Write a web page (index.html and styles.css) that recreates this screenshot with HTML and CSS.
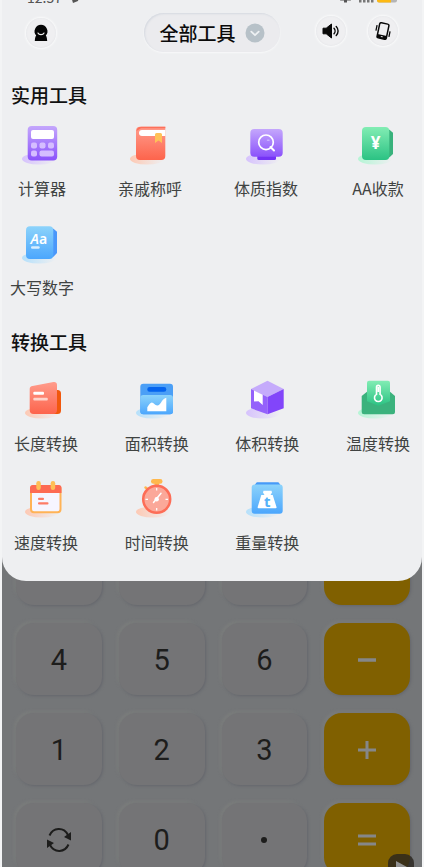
FILE: index.html
```html
<!DOCTYPE html>
<html lang="zh-CN">
<head>
    <meta charset="UTF-8">
    <meta name="viewport" content="width=device-width, initial-scale=1.0">
    <title>全部工具</title>
    <link rel="stylesheet" href="styles.css">
</head>
<body>
    <!-- gradients shared by the tool icons -->
    <svg class="defs" width="0" height="0" aria-hidden="true">
        <defs>
            <linearGradient id="purple" x1="0" y1="0" x2="0" y2="1"><stop offset="0" stop-color="#c4a7fc"/><stop offset="1" stop-color="#8b52fb"/></linearGradient>
            <linearGradient id="red" x1="0" y1="0" x2="0" y2="1"><stop offset="0" stop-color="#ff9c8c"/><stop offset="1" stop-color="#fd644c"/></linearGradient>
            <linearGradient id="green" x1="0" y1="0" x2="0" y2="1"><stop offset="0" stop-color="#82edb4"/><stop offset="1" stop-color="#2bc283"/></linearGradient>
            <linearGradient id="blue" x1="0" y1="0" x2="0" y2="1"><stop offset="0" stop-color="#8cd3fb"/><stop offset="1" stop-color="#4ba6fd"/></linearGradient>
            <linearGradient id="purple-shade"><stop offset="0" stop-color="#d6c2fd"/><stop offset="1" stop-color="#d6c2fd" stop-opacity="0"/></linearGradient>
            <linearGradient id="red-shade"><stop offset="0" stop-color="#fdc9b4"/><stop offset="1" stop-color="#fdc9b4" stop-opacity="0"/></linearGradient>
            <linearGradient id="green-shade"><stop offset="0" stop-color="#b4f5d5"/><stop offset="1" stop-color="#b4f5d5" stop-opacity="0"/></linearGradient>
            <linearGradient id="blue-shade"><stop offset="0" stop-color="#b5e0fb"/><stop offset="1" stop-color="#b5e0fb" stop-opacity="0"/></linearGradient>
        </defs>
    </svg>

    <div class="screen">
        <main class="panel">
            <div class="status">
                <span class="status-time">12:57</span>
                <svg class="status-arrow" width="10" height="10" viewBox="0 0 10 10"><path d="M0 0h10L8 8 3 10z" fill="#555"/></svg>
                <svg class="status-icons" width="57" height="12" viewBox="0 0 57 12">
                    <path d="M0 9.500h11L9 6H2zM4 9.500h3v2H4z" fill="#555"/>
                    <path d="M19 6h2.500v5.500H19zM23 4h2.500v7.500H23zM27 2h2.500v9.500H27zM31 0h2.500v11.500H31z" fill="#777"/>
                    <rect x="37" y="0" width="20" height="11.500" rx="2" fill="#b5b5b5"/>
                    <path d="M37 0h14v11.500H39a2 2 0 0 1-2-2z" fill="#fdb913"/>
                </svg>
            </div>

            <header class="toolbar">
                <button class="round" aria-label="我的">
                    <svg width="16" height="18" viewBox="0 0 16 18"><path d="M8 .8a6.500 6.500 0 0 1 4.800 10.800c.8.800 1.200 2.500 1.400 5.400H1.800c.2-2.900.6-4.600 1.400-5.400A6.500 6.500 0 0 1 8 .8z" fill="#050505"/><path d="M5 9c1 2.200 5 2.200 6 0" fill="none" stroke="#eee" stroke-width="1.200" stroke-linecap="round"/></svg>
                </button>
                <button class="picker">
                    全部工具
                    <svg width="20" height="20" viewBox="0 0 20 20"><circle cx="10" cy="10" r="9.500" fill="#b7c1c8"/><path d="M6.300 8.700 10 12.200l3.700-3.500" fill="none" stroke="#eef1f3" stroke-width="1.800" stroke-linecap="round" stroke-linejoin="round"/></svg>
                </button>
                <div class="actions">
                    <button class="round" aria-label="声音">
                        <svg width="18" height="16" viewBox="0 0 18 16"><path d="M1 5.200h3.200L9.500 1v14l-5.300-4.200H1z" fill="#080808" stroke="#080808" stroke-linejoin="round"/><path d="M12 5.300c1.400 1.500 1.400 4 0 5.500M14.200 3.500c2.500 2.500 2.500 6.500 0 9" fill="none" stroke="#080808" stroke-width="1.400" stroke-linecap="round"/></svg>
                    </button>
                    <button class="round" aria-label="振动">
                        <svg width="18" height="18" viewBox="0 0 18 18"><g transform="rotate(12 9 9)"><rect x="4.300" y="1.300" width="9.400" height="15.400" rx="1.500" fill="none" stroke="#080808" stroke-width="1.500"/><path d="M4.300 13h9.400v3.700H4.300z" fill="#080808"/><path d="M8 14.800h2" stroke="#eee"/><path d="M2 4.500v5.500M16 8v5.500" stroke="#080808" stroke-width="1.300"/></g></svg>
                    </button>
                </div>
            </header>

            <section>
                <h2 class="section-title">实用工具</h2>
                <div class="tools tools-daily">
                    <button class="tool">
                        <svg width="44" height="44" viewBox="0 0 44 44">
                            <ellipse cx="19" cy="37" rx="17" ry="5.500" fill="url(#purple-shade)"/>
                            <rect x="7.700" y="4" width="29.500" height="34.500" rx="4" fill="url(#purple)"/>
                            <rect x="11" y="8" width="23" height="9" rx="2" fill="#fff"/>
                            <g fill="#d5bdff"><rect x="11" y="20.500" width="6" height="6" rx="2"/><rect x="19.500" y="20.500" width="6" height="6" rx="2"/><rect x="28" y="20.500" width="6" height="6" rx="2"/><rect x="11" y="28.500" width="6" height="6" rx="2"/><rect x="19.500" y="28.500" width="14.500" height="6" rx="2"/></g>
                        </svg>
                        计算器
                    </button>
                    <button class="tool">
                        <svg width="44" height="44" viewBox="0 0 44 44">
                            <ellipse cx="19" cy="37" rx="17" ry="5.500" fill="url(#red-shade)"/>
                            <path d="M12 4.700h25.300V34a4 4 0 0 1-4 4H12a4 4 0 0 1-4-4V8.700a4 4 0 0 1 4-4z" fill="url(#red)"/>
                            <path d="M8.500 9c.5-3 2-4.300 5-4.300h23.800v1.600H13" fill="#fd705a"/>
                            <path d="M14 8h23.300v6H14a3 3 0 0 1 0-6z" fill="#fff"/>
                            <path d="M27 12.500a1.500 1.500 0 0 1 1.500-1.500h4a1.500 1.500 0 0 1 1.500 1.500V21l-3.500-2.500L27 21z" fill="#ffc157"/>
                        </svg>
                        亲戚称呼
                    </button>
                    <button class="tool">
                        <svg width="44" height="44" viewBox="0 0 44 44">
                            <ellipse cx="19" cy="37" rx="17" ry="5.500" fill="url(#purple-shade)"/>
                            <path d="M13.300 34h18.700v2.500a1.500 1.500 0 0 1-1.500 1.500H14.800a1.500 1.500 0 0 1-1.500-1.500z" fill="#7433f5"/>
                            <rect x="6.300" y="7" width="32.400" height="27.700" rx="4" fill="url(#purple)"/>
                            <circle cx="22" cy="20.300" r="7.300" fill="none" stroke="#fff" stroke-width="1.700"/>
                            <path d="m26.500 25 3.500 3.500" stroke="#fff" stroke-width="2" stroke-linecap="round"/>
                            <path d="M23.500 18.200h1.500" stroke="#c9b0ff" stroke-width="1.500" stroke-linecap="round"/>
                        </svg>
                        体质指数
                    </button>
                    <button class="tool">
                        <svg width="44" height="44" viewBox="0 0 44 44">
                            <ellipse cx="19" cy="37" rx="17" ry="5.500" fill="url(#green-shade)"/>
                            <path d="M28 7.700h5.500l3.500 3V32l-3.500 3.300H28z" fill="#38b27c"/>
                            <rect x="6" y="5" width="27.300" height="33" rx="4" fill="url(#green)"/>
                            <text class="glyph" x="19.700" y="27" text-anchor="middle" font-size="17" fill="#fff">¥</text>
                        </svg>
                        AA收款
                    </button>
                    <button class="tool">
                        <svg width="44" height="44" viewBox="0 0 44 44">
                            <ellipse cx="19" cy="37" rx="17" ry="5.500" fill="url(#blue-shade)"/>
                            <path d="M28 7.700h5.500l3.500 3V32l-3.500 3.700H28z" fill="#4a97fa"/>
                            <rect x="6" y="5.300" width="27.300" height="32.700" rx="4" fill="url(#blue)"/>
                            <text class="glyph glyph-light" x="10.500" y="22.500" font-size="14" fill="#fff"><tspan font-style="italic">A</tspan>a</text>
                            <rect x="11" y="25.300" width="8.700" height="2.500" rx="1.200" fill="#d9efff"/>
                        </svg>
                        大写数字
                    </button>
                </div>
            </section>

            <section>
                <h2 class="section-title">转换工具</h2>
                <div class="tools tools-convert">
                    <button class="tool">
                        <svg width="44" height="44" viewBox="0 0 44 44">
                            <ellipse cx="18" cy="36" rx="17" ry="5.500" fill="url(#red-shade)"/>
                            <path d="M29 13h4.500a3.500 3.500 0 0 1 3.500 3.500v17a3.500 3.500 0 0 1-3.500 3.500H29z" fill="#f1580d"/>
                            <path d="M8.500 9 29.500 5c2-.3 3.500.7 3.500 2.700V33a4 4 0 0 1-4 4H9.700a4 4 0 0 1-4-4V12c0-1.700 1-2.700 2.800-3z" fill="url(#red)"/>
                            <rect x="9.300" y="14.700" width="10.700" height="3" rx="1" fill="#fff"/>
                            <rect x="9.300" y="20.700" width="14.500" height="2.700" rx="1" fill="#ffd3ca"/>
                        </svg>
                        长度转换
                    </button>
                    <button class="tool">
                        <svg width="44" height="44" viewBox="0 0 44 44">
                            <ellipse cx="18" cy="36" rx="17" ry="5.500" fill="url(#blue-shade)"/>
                            <rect x="5.300" y="6.700" width="32.700" height="30.600" rx="3" fill="#4b9ff6"/>
                            <rect x="12.300" y="10" width="19" height="4.700" rx="2.300" fill="#0564ee"/>
                            <rect x="5.300" y="18" width="32.700" height="19.300" rx="3" fill="url(#blue)"/>
                            <path d="M12.300 34.300v-4c1.500-2.300 3-4.800 4.500-4.800 2 0 3 3 5.500 3 3.500 0 4-6.500 9-7.800v13.600z" fill="#fff"/>
                        </svg>
                        面积转换
                    </button>
                    <button class="tool">
                        <svg width="44" height="44" viewBox="0 0 44 44">
                            <ellipse cx="18" cy="36" rx="17" ry="5.500" fill="url(#purple-shade)"/>
                            <path d="M22.500 3.700 38.700 12l-16.200 8L6 12z" fill="#c5abfb"/>
                            <path d="m6 12 16.500 8v17.300L6 31.300z" fill="#9461fb"/>
                            <path d="m38.700 12-16.200 8v17.300l16.200-6z" fill="#8245fa"/>
                            <path d="m9 13.500 8.700 4.200V28l-4.200-3.800L9 24.500z" fill="#fff"/>
                        </svg>
                        体积转换
                    </button>
                    <button class="tool">
                        <svg width="44" height="44" viewBox="0 0 44 44">
                            <ellipse cx="19" cy="36" rx="17" ry="5.500" fill="url(#green-shade)"/>
                            <path d="m5.700 19 5.300-4.300h23l5 4.300v15.800a2.500 2.500 0 0 1-2.500 2.500H8.200a2.500 2.500 0 0 1-2.500-2.500z" fill="#3bb27d"/>
                            <path d="M13 3.700h19a2 2 0 0 1 2 2v18.600l-11.700 4.500L11 24.300V5.700a2 2 0 0 1 2-2z" fill="url(#green)"/>
                            <path d="M20.500 10.200a1.800 1.800 0 0 1 3.600 0v7.200a3.800 3.800 0 1 1-3.600 0z" fill="none" stroke="#fff" stroke-width="1.600"/>
                            <path d="M22.300 10v5" stroke="#fff" stroke-width="2"/>
                        </svg>
                        温度转换
                    </button>
                    <button class="tool">
                        <svg width="44" height="44" viewBox="0 0 44 44">
                            <ellipse cx="18" cy="36" rx="17" ry="5.500" fill="url(#red-shade)"/>
                            <rect x="7" y="10" width="29.500" height="26.200" rx="3" fill="#f6f5ff" stroke="#ffb356" stroke-width="2"/>
                            <path d="M6 17v-5a3 3 0 0 1 3-3h25.500a3 3 0 0 1 3 3v5z" fill="#fd6a53"/>
                            <rect x="12.300" y="5" width="4.500" height="9" rx="2.200" fill="#ffbf55"/>
                            <rect x="26.700" y="5" width="4.500" height="9" rx="2.200" fill="#ffbf55"/>
                            <rect x="14" y="21.700" width="6" height="2.200" rx="1" fill="#fd7b66"/>
                            <rect x="14" y="26.200" width="10.500" height="2.200" rx="1" fill="#fd7b66"/>
                        </svg>
                        速度转换
                    </button>
                    <button class="tool">
                        <svg width="44" height="44" viewBox="0 0 44 44">
                            <ellipse cx="18" cy="36" rx="17" ry="5.500" fill="url(#red-shade)"/>
                            <rect x="16" y="3" width="11.500" height="4.700" rx="2.300" fill="#ffb84d"/>
                            <path d="M19.500 7h4.500v3h-4.500z" fill="#ffb84d"/>
                            <path d="m10.500 11.500 2.500 2" stroke="#ffb84d" stroke-width="2.500" stroke-linecap="round"/>
                            <circle cx="21.700" cy="23.300" r="13.500" fill="#fba899" stroke="#fd6d57" stroke-width="2.500"/>
                            <path d="M21.700 12v2.500M21.700 32v2.500M10.500 23.300H13M30.500 23.300H33" stroke="#fff" stroke-width="1.200"/>
                            <path d="M18.500 26.500 26 17.300" stroke="#fff" stroke-width="1.500" stroke-linecap="round"/>
                            <circle cx="21.700" cy="23.300" r="2.200" fill="#fff"/>
                        </svg>
                        时间转换
                    </button>
                    <button class="tool">
                        <svg width="44" height="44" viewBox="0 0 44 44">
                            <ellipse cx="18" cy="36" rx="17" ry="5.500" fill="url(#blue-shade)"/>
                            <path d="m9 10 2.300-3.200a1 1 0 0 1 .8-.5h21a1 1 0 0 1 .8.500L36 10z" fill="#469af8"/>
                            <rect x="6.700" y="8.500" width="31" height="29.200" rx="3" fill="url(#blue)"/>
                            <path d="M18.500 14.700h8l.5 1.800-1.500 2.500h2.200L31.500 31a1 1 0 0 1-1 1.300H13.700a1 1 0 0 1-1-1.300l3.600-12h3.200L18 16.500z" fill="#fff"/>
                            <text class="glyph" x="22.300" y="30.500" text-anchor="middle" font-size="15" fill="#55b2f8">t</text>
                        </svg>
                        重量转换
                    </button>
                </div>
            </section>
        </main>

        <div class="keypad">
            <button class="key" aria-label="七"></button>
            <button class="key" aria-label="八"></button>
            <button class="key" aria-label="九"></button>
            <button class="key key-op" aria-label="乘"></button>
            <button class="key">4</button>
            <button class="key">5</button>
            <button class="key">6</button>
            <button class="key key-op" aria-label="减">
                <svg width="20" height="20" viewBox="0 0 20 20"><path d="M1 10h18" stroke="#858789" stroke-width="3.500"/></svg>
            </button>
            <button class="key">1</button>
            <button class="key">2</button>
            <button class="key">3</button>
            <button class="key key-op" aria-label="加">
                <svg width="20" height="20" viewBox="0 0 20 20"><path d="M1 10h18M10 1v18" stroke="#858789" stroke-width="3"/></svg>
            </button>
            <button class="key" aria-label="切换">
                <svg width="26" height="26" viewBox="0 0 26 26"><g fill="none" stroke="#1d1d1c" stroke-width="2"><path d="M3.500 8.500C7 .5 17.500-.5 22 8"/><path d="M22.500 17.500C19 25.500 8.500 26.500 4 18"/></g><path d="M25 5v8.500L18 10zM1 21v-8.500l7 3.500z" fill="#1d1d1c"/></svg>
            </button>
            <button class="key">0</button>
            <button class="key" aria-label="小数点">
                <svg width="8" height="8" viewBox="0 0 8 8"><circle cx="4" cy="4" r="3" fill="#1d1d1c"/></svg>
            </button>
            <button class="key key-op" aria-label="等于">
                <svg width="20" height="20" viewBox="0 0 20 20"><path d="M1 6h18M1 14h18" stroke="#858789" stroke-width="3"/></svg>
            </button>
        </div>

        <button class="play" aria-label="播放">
            <svg width="12" height="12" viewBox="0 0 12 12"><path d="M1 0v12l11-6z" fill="#929292"/></svg>
        </button>
    </div>
</body>
</html>
```
FILE: styles.css
```css
* {
    box-sizing: border-box;
}
body {
    margin: 0;
    background-color: #f3f4f5;
    font-family: "Noto Sans CJK SC", sans-serif;
}
button {
    margin: 0;
    padding: 0;
    border: none;
    background: none;
    font-family: inherit;
    color: inherit;
    cursor: pointer;
}
svg {
    display: block;
    flex: none;
}
.defs {
    position: absolute;
}
.glyph {
    font-family: "Noto Sans", sans-serif;
    font-weight: 700;
}
.glyph-light {
    font-weight: 600;
}
.screen {
    position: relative;
    height: 100vh;
    margin: 0 2px;
    overflow: hidden;
    background-color: #747678;
}

/* tool panel */
.panel {
    position: relative;
    z-index: 1;
    padding-bottom: 27px;
    border-radius: 0 0 24px 24px;
    background-color: #eeeff1;
}
.status {
    display: flex;
    align-items: flex-end;
    height: 3px;
    padding: 0 25px;
    overflow: hidden;
}
.status-time {
    font-size: 14px;
    line-height: 12px;
    color: #555;
}
.status-arrow {
    margin-left: 8px;
}
.status-icons {
    margin-left: auto;
}
.toolbar {
    display: grid;
    grid-template-columns: 1fr auto 1fr;
    align-items: center;
    padding: 10px 24px 0;
}
.round {
    display: flex;
    align-items: center;
    justify-content: center;
    width: 30px;
    height: 30px;
    border-radius: 50%;
    background-color: #efeff1;
    box-shadow: 0 0 2px 1px #fafbfb, inset 0 0 2px #dfe1e5;
}
.picker {
    display: flex;
    align-items: center;
    gap: 9px;
    height: 39px;
    padding: 0 15px;
    border-radius: 20px;
    background-color: #ebebee;
    box-shadow: inset 1px 1px 2px #d5d9e0, 0 1px 2px #f8f9fa;
    font-size: 19px;
    font-weight: 500;
    color: #0a0a0a;
}
.actions {
    display: flex;
    justify-content: flex-end;
    gap: 22px;
    padding-bottom: 4px;
}
.section-title {
    margin: 29px 0 0;
    padding-left: 9px;
    font-size: 19px;
    font-weight: 500;
    line-height: 28px;
    color: #111;
}
.tools {
    display: grid;
    justify-content: space-between;
    row-gap: 21px;
}
.tools-daily {
    grid-template-columns: 64px 64px 80px 56px;
    padding: 13px 16px 0 8px;
}
.tools-convert {
    grid-template-columns: repeat(4, 66px);
    padding: 21px 11px 0;
}
.tool {
    display: flex;
    flex-direction: column;
    align-items: center;
    gap: 10px;
    font-size: 16px;
    line-height: 24px;
    white-space: nowrap;
    color: #404342;
}

/* dimmed keypad, its first row is partly under the panel */
.keypad {
    display: grid;
    grid-template-columns: repeat(4, 1fr);
    grid-auto-rows: 72px;
    gap: 18px 17px;
    margin-top: -48px;
    padding: 0 12px 0 14px;
}
.key {
    display: flex;
    align-items: center;
    justify-content: center;
    padding-top: 2px;
    border-radius: 18px;
    background-color: #747476;
    box-shadow: 1px 1px 3px #65676d, -2px -2px 3px #7b7d7c;
    font-family: Roboto, sans-serif;
    font-size: 29px;
    font-weight: 400;
    line-height: 36px;
    color: #1d1d1c;
}
.key-op {
    background-color: #806000;
}
.play {
    position: absolute;
    right: 8px;
    bottom: -13px;
    z-index: 2;
    display: flex;
    align-items: center;
    justify-content: center;
    width: 26px;
    height: 26px;
    border-radius: 9px;
    background-color: rgba(40, 36, 30, 0.8);
}
```
